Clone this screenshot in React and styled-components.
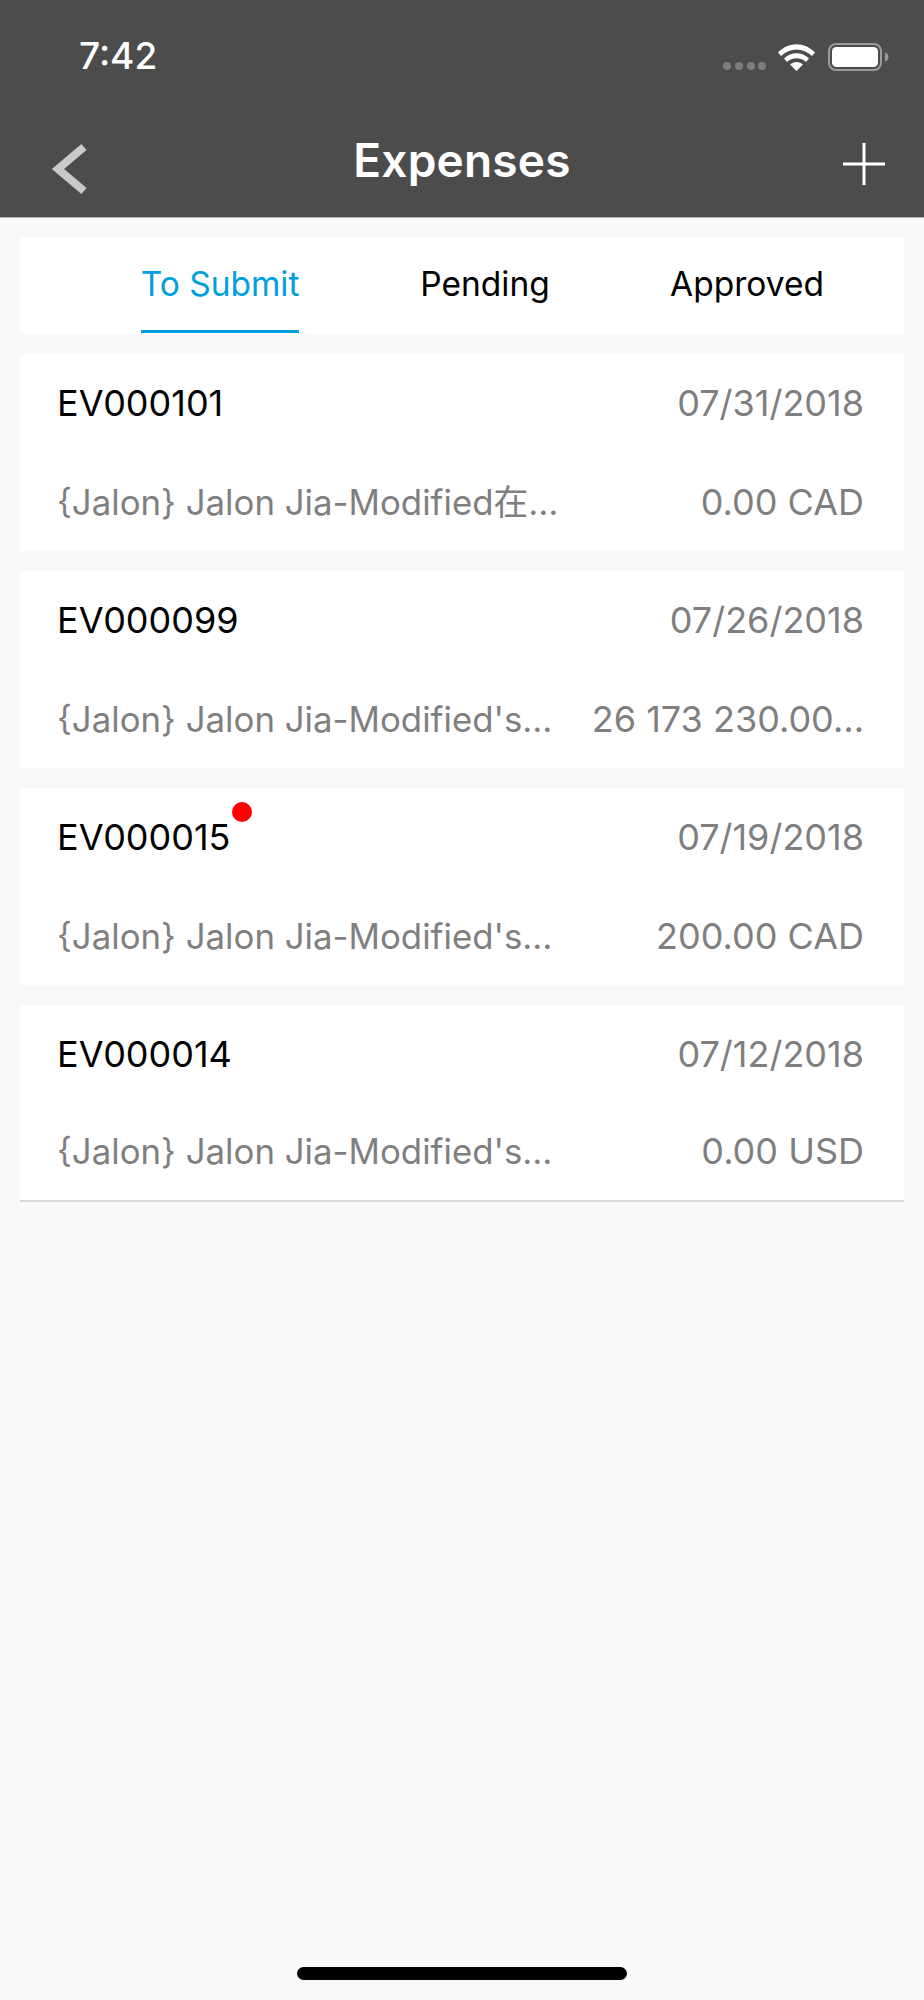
import React from "react";
import styled, { createGlobalStyle } from "styled-components";

const Global = createGlobalStyle`
  html, body { margin: 0; padding: 0; background: #f9f9f9; }
  body { font-family: Inter, "Noto Sans CJK SC", sans-serif; }
  * { box-sizing: border-box; }
`;

const Page = styled.div`
  width: 924px;
  height: 2000px;
  display: flex;
  flex-direction: column;
  background: #f9f9f9;
`;

const Header = styled.header`
  height: 218px;
  background: #4c4c4c;
  border-bottom: 1px solid #b5b5b5;
  display: flex;
  flex-direction: column;
  color: #fff;
`;

const StatusBar = styled.div`
  height: 112px;
  padding: 34px 35px 0 79px;
  display: flex;
  justify-content: space-between;
  align-items: flex-start;
`;

const Time = styled.span`
  font-size: 37px;
  line-height: 44px;
  font-weight: 500;
`;

const StatusIcons = styled.div`
  margin-top: 9px;
  width: 167px;
  height: 28px;
  display: flex;
  align-items: flex-end;
`;

const Nav = styled.nav`
  flex: 1;
  padding: 0 38px 0 50px;
  display: grid;
  grid-template-columns: 1fr auto 1fr;
  align-items: center;
`;

const Title = styled.h1`
  margin: 0 12px 0 0;
  font-size: 46px;
  line-height: 56px;
  font-weight: 600;
  letter-spacing: 0.2px;
  transform: translateY(-5px);
`;

const BackIcon = styled.svg`
  display: block;
  justify-self: start;
  margin-top: 8px;
`;

const AddIcon = styled.svg`
  display: block;
  justify-self: end;
  margin-top: -2px;
`;

const Content = styled.main`
  flex: 1;
  padding: 19px 20px 0;
  display: flex;
  flex-direction: column;
  gap: 20px;
`;

const Tabs = styled.div`
  height: 97px;
  background: #fff;
  padding-left: 68px;
  display: grid;
  grid-template-columns: 264px 266px 258px;
`;

const Tab = styled.div`
  justify-self: center;
  height: 96px;
  display: flex;
  align-items: center;
  font-size: 33.5px;
  color: ${(p) => (p.$active ? "#00a0dc" : "#000")};
  border-bottom: 3px solid ${(p) => (p.$active ? "#00a0dc" : "transparent")};
`;

const Card = styled.article`
  height: 197px;
  background: #fff;
  padding: 0 40px 0 37px;
  display: grid;
  grid-template-rows: 1fr 1fr;
  border-bottom: ${(p) => (p.$last ? "2px solid #dcdcdc" : "none")};
`;

const Row = styled.div`
  display: flex;
  justify-content: space-between;
  align-items: center;
  line-height: 44px;
  white-space: nowrap;
`;

const Code = styled.span`
  position: relative;
  color: #000;
  font-size: 36px;
`;

const Dot = styled.i`
  position: absolute;
  right: -21px;
  top: -13px;
  width: 20px;
  height: 20px;
  border-radius: 50%;
  background: #fe0000;
`;

const Description = styled.span`
  color: #7f7f7f;
  font-size: 34.8px;
`;

const Value = styled.span`
  color: #7f7f7f;
  font-size: 36px;
`;

const HomeBar = styled.div`
  padding-bottom: 20px;
  display: flex;
  justify-content: center;
`;

const HomeIndicator = styled.div`
  width: 330px;
  height: 13px;
  border-radius: 7px;
  background: #000;
`;

const tabs = ["To Submit", "Pending", "Approved"];
const items = [
  { code: "EV000101", date: "07/31/2018", desc: "{Jalon} Jalon Jia-Modified在…", amount: "0.00 CAD" },
  { code: "EV000099", date: "07/26/2018", desc: "{Jalon} Jalon Jia-Modified's…", amount: "26 173 230.00…" },
  { code: "EV000015", date: "07/19/2018", desc: "{Jalon} Jalon Jia-Modified's…", amount: "200.00 CAD", unread: true },
  { code: "EV000014", date: "07/12/2018", desc: "{Jalon} Jalon Jia-Modified's…", amount: "0.00 USD" },
];

const StatusGlyphs = () => (
  <svg width="167" height="28" viewBox="0 0 167 28">
    <g fill="#7d7d7d">
      <circle cx="5" cy="23" r="4" />
      <circle cx="17" cy="23" r="4" />
      <circle cx="29" cy="23" r="4" />
      <circle cx="40" cy="23" r="4" />
    </g>
    <g fill="#fff">
      <path d="M56 9.500C66.500 -1.500 82.500 -1.500 93 9.500L90 13C81 4.300 68 4.300 59 13Z" />
      <path d="M62 15.500C69 8.600 80 8.600 87 15.500L84 19C78.500 14 70.500 14 65 19Z" />
      <path d="M68 21.500C72 18 77 18 81 21.500L74.500 28Z" />
    </g>
    <rect x="107" y="1" width="52" height="26" rx="7" fill="none" stroke="#9a9a9a" strokeWidth="2" />
    <rect x="110" y="4" width="46" height="20" rx="4.500" fill="#fff" />
    <path d="M163 9.500c2.400.7 3.500 2.400 3.500 4.500s-1.100 3.800-3.500 4.500Z" fill="#9a9a9a" />
  </svg>
);

export default function App() {
  return (
    <Page>
      <Global />
      <Header>
        <StatusBar>
          <Time>7:42</Time>
          <StatusIcons>
            <StatusGlyphs />
          </StatusIcons>
        </StatusBar>
        <Nav>
          <BackIcon width="40" height="52" viewBox="0 0 40 52">
            <path d="M34 4L8 26L34 48" fill="none" stroke="#c9c9c9" strokeWidth="8" />
          </BackIcon>
          <Title>Expenses</Title>
          <AddIcon width="44" height="44" viewBox="0 0 44 44">
            <path d="M22 1V43M1 22H43" fill="none" stroke="#fff" strokeWidth="3" />
          </AddIcon>
        </Nav>
      </Header>
      <Content>
        <Tabs>
          {tabs.map((t, i) => (
            <Tab key={t} $active={i === 0}>
              {t}
            </Tab>
          ))}
        </Tabs>
        {items.map((it, i) => (
          <Card key={it.code} $last={i === items.length - 1}>
            <Row>
              <Code>
                {it.code}
                {it.unread && <Dot />}
              </Code>
              <Value>{it.date}</Value>
            </Row>
            <Row>
              <Description>{it.desc}</Description>
              <Value>{it.amount}</Value>
            </Row>
          </Card>
        ))}
      </Content>
      <HomeBar>
        <HomeIndicator />
      </HomeBar>
    </Page>
  );
}
